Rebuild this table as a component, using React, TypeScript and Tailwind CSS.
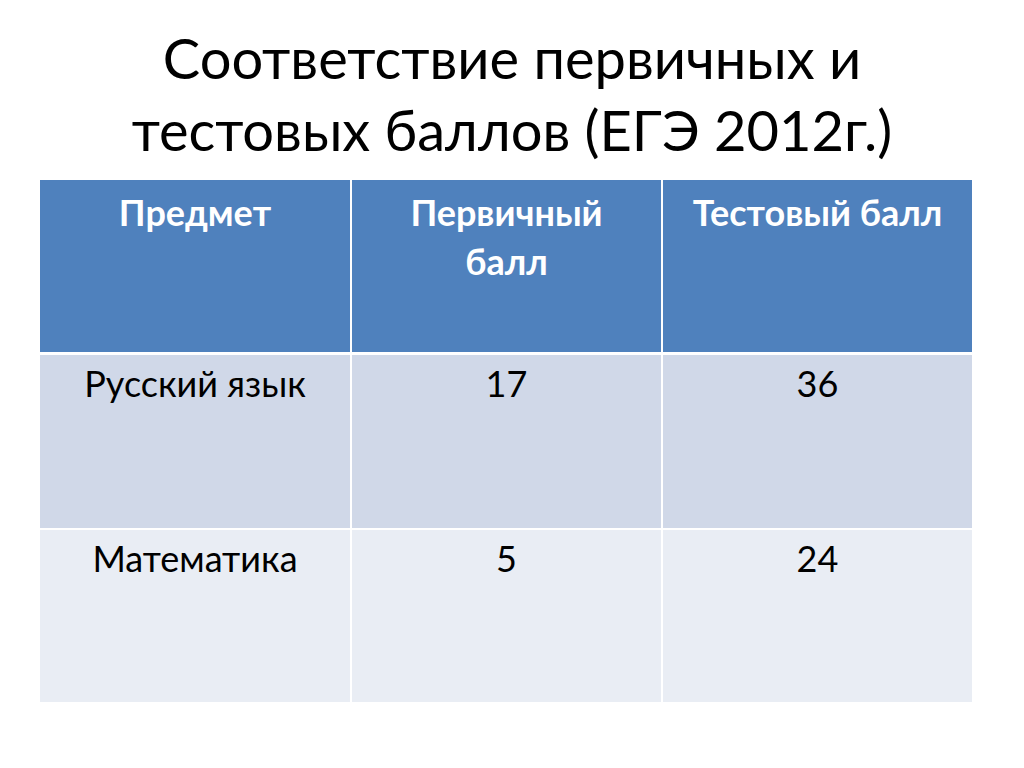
const rows = [
    { subject: "Русский язык", primary: "17", test: "36", bg: "bg-[#d0d8e8]", top: "mt-[3px]" },
    { subject: "Математика", primary: "5", test: "24", bg: "bg-[#e9edf4]", top: "mt-[2px]" },
];

const headCell = "bg-[#4f81bd] px-3 pt-[8px] text-center text-[36px] leading-[49px] font-bold text-white";
const bodyCell = "pt-[4px] text-center text-[36px] leading-[49px]";

export default function App() {
    return (
        <div className="h-[768px] w-[1024px] bg-white font-['Lato',sans-serif] text-black">
            <h1 className="pt-[22px] text-center text-[56px] leading-[72px] font-normal">
                Соответствие первичных и
                <br />
                тестовых баллов (ЕГЭ 2012г.)
            </h1>

            <div className="ml-[40px] mt-[14px] grid w-[932px] grid-cols-[310px_309px_309px] grid-rows-[172px_176px_174px] gap-x-[2px] bg-white">
                <div className={headCell}>Предмет</div>
                <div className={headCell}>
                    Первичный
                    <br />
                    балл
                </div>
                <div className={headCell}>Тестовый балл</div>

                {rows.map((row) => (
                    <div key={row.subject} className="contents">
                        <div className={`${row.bg} ${row.top} ${bodyCell}`}>{row.subject}</div>
                        <div className={`${row.bg} ${row.top} ${bodyCell}`}>{row.primary}</div>
                        <div className={`${row.bg} ${row.top} ${bodyCell}`}>{row.test}</div>
                    </div>
                ))}
            </div>
        </div>
    );
}
